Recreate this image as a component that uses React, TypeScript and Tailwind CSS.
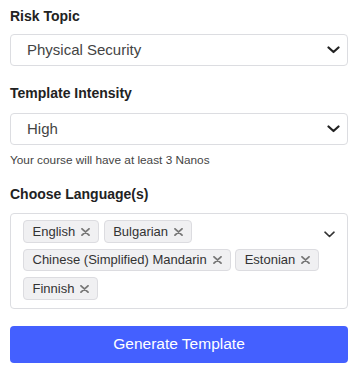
import React from "react";

const Chevron = () => (
  <svg width="13" height="8" viewBox="0 0 13 8" fill="none">
    <path d="M1.5 1.5 L6.5 6 L11.5 1.5" stroke="#222" strokeWidth="2.2" strokeLinecap="round" strokeLinejoin="round" />
  </svg>
);

const ThinChevron = () => (
  <svg width="11" height="7" viewBox="0 0 11 7" fill="none">
    <path d="M1 1.2 L5.5 5.5 L10 1.2" stroke="#333" strokeWidth="1.6" strokeLinecap="round" strokeLinejoin="round" />
  </svg>
);

const XIcon = () => (
  <svg width="9" height="8" viewBox="0 0 9 8" fill="none">
    <path d="M1 0.8 L8 7.2 M8 0.8 L1 7.2" stroke="#777" strokeWidth="1.8" strokeLinecap="round" />
  </svg>
);

const Select = ({ value }: { value: string }) => (
  <div className="flex h-[32px] items-center justify-between rounded-[4px] border border-[#dcdde1] bg-white pl-[16px] pr-[7px]">
    <span className="text-[15px] text-[#444]">{value}</span>
    <Chevron />
  </div>
);

const Chip = ({ label }: { label: string }) => (
  <div className="flex h-[22.5px] items-center rounded-[4px] border border-[#dcdce0] bg-[#f0f0f2] pl-[8.5px] pr-[8px]">
    <span className="text-[13px] leading-none text-[#333]">{label}</span>
    <span className="ml-[6px] flex items-center pt-[1px]">
      <XIcon />
    </span>
  </div>
);

export default function App() {
  const langs = ["English", "Bulgarian", "Chinese (Simplified) Mandarin", "Estonian", "Finnish"];
  return (
    <div
      className="flex h-[371px] w-[361px] flex-col bg-white pl-[10px] pr-[13px] pt-[6px]"
      style={{ fontFamily: '"Liberation Sans", Arial, sans-serif' }}
    >
      <div className="h-[20px] text-[14px] font-bold leading-[20px] text-[#222]">Risk Topic</div>
      <div className="mt-[8px]">
        <Select value="Physical Security" />
      </div>
      <div className="mt-[17px] h-[20px] text-[14px] font-bold leading-[20px] text-[#222]">Template Intensity</div>
      <div className="mt-[10px]">
        <Select value="High" />
      </div>
      <div className="mt-[7px] text-[11.8px] leading-[16px] text-[#444]">Your course will have at least 3 Nanos</div>
      <div className="mt-[16px] h-[20px] text-[14px] font-bold leading-[20px] text-[#222]">Choose Language(s)</div>
      <div className="mt-[9px] flex rounded-[4px] border border-[#dcdde1] bg-white pb-[8px] pl-[12px] pt-[6px]">
        <div className="flex flex-1 flex-wrap gap-x-[4.5px] gap-y-[6px]">
          {langs.map((l) => (
            <Chip key={l} label={l} />
          ))}
        </div>
        <div className="flex w-[24px] shrink-0 justify-start pl-[1px] pt-[11px]">
          <ThinChevron />
        </div>
      </div>
      <button className="mt-[17px] h-[37px] rounded-[4px] bg-[#4460ff] text-[15.5px] text-white">
        Generate Template
      </button>
    </div>
  );
}
